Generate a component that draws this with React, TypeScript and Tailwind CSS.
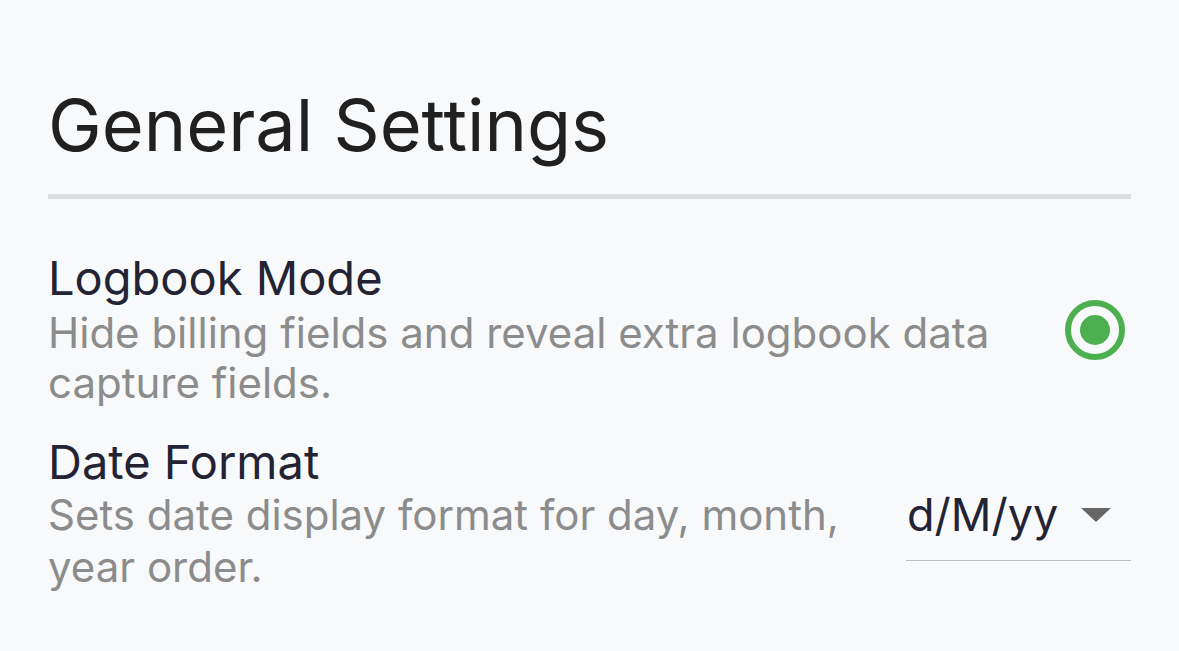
import { useState } from "react"

export default function App() {
  const [logbook, setLogbook] = useState(true)
  const [format] = useState("d/M/yy")

  return (
    <div className="min-h-screen bg-[#f8f9fb] px-12 pt-[82px] font-['Inter',sans-serif]">
      <h1 className="text-[72px] leading-[86px] font-normal text-[#202020]">General Settings</h1>
      <div className="mt-[26px] h-[5px] bg-[#dcdde0]" />

      <div className="mt-[52px] flex items-center gap-[70px]">
        <div className="flex-1">
          <div className="text-[47px] leading-[54px] text-[#232334]">Logbook Mode</div>
          <p className="pt-[3px] text-[42px] leading-[50px] text-[#8c8c8c]">
            Hide billing fields and reveal extra logbook data capture fields.
          </p>
        </div>
        <button
          onClick={() => setLogbook(!logbook)}
          className="mr-[6px] flex h-[60px] w-[60px] items-center justify-center rounded-full border-[6px] border-[#4caf50]"
        >
          {logbook && <span className="h-[30px] w-[30px] rounded-full bg-[#4caf50]" />}
        </button>
      </div>

      <div className="mt-[27px] flex items-center gap-[40px]">
        <div className="flex-1">
          <div className="text-[47px] leading-[54px] text-[#232334]">Date Format</div>
          <p className="text-[42px] leading-[52px] text-[#8c8c8c]">
            Sets date display format for day, month, year order.
          </p>
        </div>
        <div className="mt-[20px] flex w-[225px] items-center justify-between border-b border-[#bdbdbd] pb-[17px] pl-[1px] pr-[20px]">
          <span className="text-[45px] leading-[56px] text-[#232334]">{format}</span>
          <svg width="30" height="14" viewBox="0 0 30 14">
            <path d="M0 0 L30 0 L15 14 Z" fill="#666666" />
          </svg>
        </div>
      </div>
    </div>
  )
}
